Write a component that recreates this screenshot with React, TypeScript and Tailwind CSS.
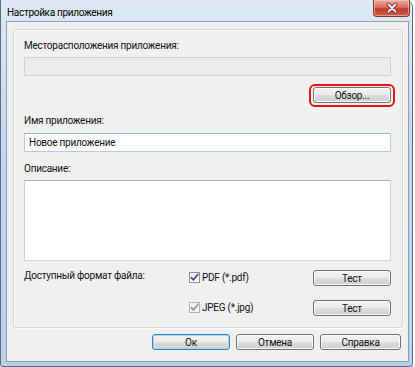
import React from 'react'

const font = "font-['Roboto','Noto_Sans',sans-serif] text-[10px] tracking-[-0.25px] leading-[15px] text-[#111]"

function Button({ label, width, primary }: { label: string; width: string; primary?: boolean }) {
  return (
    <button
      className={`${width} h-[16px] flex items-center justify-center rounded-[3px] border ${
        primary
          ? 'border-[#3c7fb1] shadow-[inset_0_0_0_1px_#9fdcf7]'
          : 'border-[#707070] shadow-[inset_0_0_0_1px_#fbfbfb]'
      } bg-[linear-gradient(#f3f3f3_0%,#ebebeb_50%,#dddddd_51%,#cfcfcf_100%)] ${font}`}
    >
      {label}
    </button>
  )
}

function CheckBox({ disabled }: { disabled?: boolean }) {
  return (
    <span
      className={`w-[11px] h-[11px] mt-[2px] flex items-center justify-center border ${
        disabled ? 'border-[#b1b1b1] bg-[#f4f4f4]' : 'border-[#8e8f8f] bg-[linear-gradient(#f2f2f2,#ffffff)]'
      }`}
    >
      <svg width="9" height="9" viewBox="0 0 9 9">
        <path
          d="M1.3 4.6 L3.4 6.9 L7.8 1.4"
          fill="none"
          stroke={disabled ? '#8d8d8d' : '#2c4d97'}
          strokeWidth="1.6"
          strokeLinecap="round"
          strokeLinejoin="round"
        />
      </svg>
    </span>
  )
}

function FormatRow({ label, name, disabled, first }: { label: string; name: string; disabled?: boolean; first?: boolean }) {
  return (
    <div className={`flex items-start h-[16px] ${first ? 'mt-[9px]' : 'mt-[14px]'}`}>
      <div className="w-[165px] leading-[12px]">{label}</div>
      <div className="flex items-start gap-[2px]">
        <CheckBox disabled={disabled} />
        <span className="leading-[15px]">{name}</span>
      </div>
      <div className="flex-1" />
      <Button label="Тест" width="w-[78px]" />
    </div>
  )
}

export default function App() {
  return (
    <div className={`w-[415px] h-[367px] bg-white overflow-hidden ${font}`}>
      <div className="w-[413px] h-[367px] flex flex-col border-x border-b border-[#5f6f82] rounded-tr-[7px] rounded-b-[3px] bg-[linear-gradient(#dfe9f5,#c4d7ee_40%,#bad0ea)] pl-[5px] pr-[3px] pb-[4px]">
        {/* title bar */}
        <div className="h-[21px] flex items-start justify-between">
          <span className="pl-[1px] pt-[5px] text-[10px] tracking-[-0.3px] text-black">Настройка приложения</span>
          <div className="w-[37px] h-[17px] mr-[-1px] flex items-center justify-center rounded-b-[4px] border border-t-0 border-[#7d3a35] bg-[linear-gradient(#e9a99b,#d8715f_45%,#c43f2d_55%,#c95a45)] shadow-[inset_0_0_0_1px_rgba(255,220,210,0.5)]">
            <svg width="12" height="10" viewBox="0 0 12 10">
              <path d="M2.5 1.5 L9.5 8.5 M9.5 1.5 L2.5 8.5" stroke="#5a2320" strokeWidth="3.4" strokeLinecap="round" />
              <path d="M2.5 1.5 L9.5 8.5 M9.5 1.5 L2.5 8.5" stroke="#ffffff" strokeWidth="1.8" strokeLinecap="round" />
            </svg>
          </div>
        </div>

        {/* client area */}
        <div className="flex-1 flex flex-col border border-[#8d9fb4] bg-[#f0f0f0]">
          <div className="mt-[7px] ml-[6px] mr-[5px] border border-[#d5d5d5] shadow-[inset_1px_1px_0_#fdfdfd,1px_1px_0_#fdfdfd] rounded-[2px] pl-[10px] pr-[11px] pt-[8px] pb-[11px] flex flex-col">
            <div>Месторасположения приложения:</div>
            <div className="mt-[4px] h-[19px] border border-[#d2d2d2] bg-[#ececec]" />
            <div className="mt-[11px] flex justify-end">
              <div className="relative">
                <Button label="Обзор..." width="w-[78px]" />
                <div className="absolute -inset-x-[4px] -top-[3px] -bottom-[4px] rounded-[6px] border-2 border-[#e3131b]" />
              </div>
            </div>

            <div className="mt-[10px]">Имя приложения:</div>
            <div className="mt-[5px] h-[19px] border border-[#b3cbe3] border-t-[#98b3cf] bg-white flex items-center pl-[4px]">
              Новое приложение
            </div>

            <div className="mt-[9px]">Описание:</div>
            <div className="mt-[4px] h-[81px] border border-[#d0d3d8] border-t-[#abadb3] bg-white" />

            <FormatRow first label="Доступный формат файла:" name="PDF (*.pdf)" />
            <FormatRow label="" name="JPEG (*.jpg)" disabled />
          </div>

          <div className="mt-[6px] pr-[7px] flex justify-end gap-[6px]">
            <Button label="Ок" width="w-[78px]" primary />
            <Button label="Отмена" width="w-[78px]" />
            <Button label="Справка" width="w-[81px]" />
          </div>
        </div>
      </div>
    </div>
  )
}
